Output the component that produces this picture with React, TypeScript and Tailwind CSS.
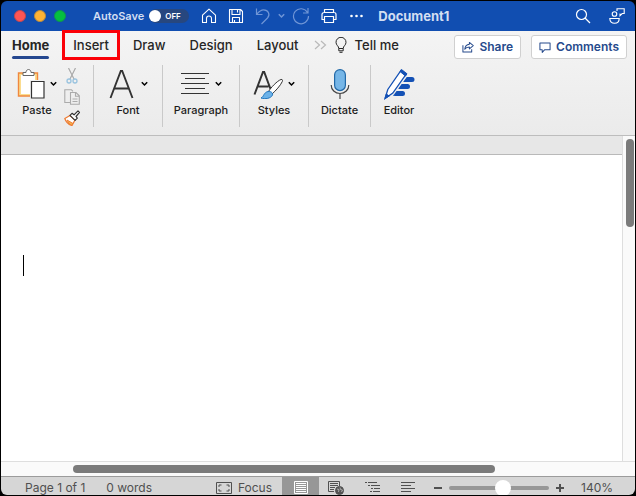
import type { ReactNode } from "react";

function Chevron({ className = "" }: { className?: string }) {
  return (
    <svg className={className} width="7" height="6" viewBox="0 0 7 6" fill="none" stroke="currentColor" strokeWidth="1.500">
      <path d="M.8 1.200 3.500 4 6.200 1.200" />
    </svg>
  );
}

function TitleBar() {
  return (
    <header className="flex h-[30px] shrink-0 items-center bg-[#114eb1] pr-[10px] pl-[13px] text-white">
      <div className="flex gap-2">
        <button aria-label="Close" className="size-3 rounded-full border border-[#c2464f] bg-[#ff5554]" />
        <button aria-label="Minimize" className="size-3 rounded-full border border-[#b98a3f] bg-[#ffb335]" />
        <button aria-label="Zoom" className="size-3 rounded-full border border-[#0f9450] bg-[#05c03f]" />
      </div>
      <label className="ml-[27px] flex items-center gap-[5px] text-[11px] leading-4 font-semibold text-[#d3def2]">
        AutoSave
        <span className="relative flex h-[14px] w-10 items-center rounded-full bg-[#27477f]">
          <input type="checkbox" role="switch" className="absolute inset-0 size-full appearance-none" />
          <span className="size-3 rounded-full bg-white" />
          <span className="ml-1 text-[8px] font-semibold text-white">OFF</span>
        </span>
      </label>
      <div className="ml-3 flex items-center gap-[11px]">
        <button aria-label="Home">
          <svg width="16" height="16" viewBox="0 0 16 16" fill="none" stroke="currentColor" strokeWidth="1.1" strokeLinejoin="round">
            <path d="M1.5 7.2 8 1.2l6.500 6v7.300h-4V10.500a2.500 2.500 0 0 0-5 0v4h-4z" />
          </svg>
        </button>
        <button aria-label="Save">
          <svg width="16" height="16" viewBox="0 0 16 16" fill="none" stroke="currentColor" strokeWidth="1.1" strokeLinejoin="round">
            <path d="M1.500 1.500h11l2 2v11h-13zM4 1.500v5h8v-5M4.500 14.500V9.500h7v5M9.500 2v2.500M6.500 12v2.500" />
          </svg>
        </button>
        <div className="flex items-center gap-[7px] text-[#6f95d6]">
          <button aria-label="Undo">
            <svg width="16" height="18" viewBox="0 0 16 18" fill="none" stroke="currentColor" strokeWidth="1.2">
              <path d="M1.500 1.500v6h6M1.800 7.200C4 4.500 6 2.800 8.500 2.800c5 0 7 5 4 8.200L6.500 17" />
            </svg>
          </button>
          <button aria-label="Undo history"><Chevron /></button>
          <button aria-label="Repeat">
            <svg width="18" height="18" viewBox="0 0 18 18" fill="none" stroke="currentColor" strokeWidth="1.200">
              <path d="M15.500 5.500A7.500 7.500 0 1 0 16.500 9M16 1v5h-5" />
            </svg>
          </button>
        </div>
        <button aria-label="Print">
          <svg width="16" height="16" viewBox="0 0 16 16" fill="none" stroke="currentColor" strokeWidth="1.200" strokeLinejoin="round">
            <path d="M3.500 4.500v-3h9v3M3.500 11.500h-2.500v-5a2 2 0 0 1 2-2h10a2 2 0 0 1 2 2v5h-2.500M3.500 8.500h9v6h-9z" />
          </svg>
        </button>
        <button aria-label="More commands" className="ml-[2px]">
          <svg width="13" height="4" viewBox="0 0 13 4" fill="currentColor">
            <circle cx="1.500" cy="2" r="1.300" /><circle cx="6.500" cy="2" r="1.300" /><circle cx="11.500" cy="2" r="1.300" />
          </svg>
        </button>
      </div>
      <h1 className="ml-[15px] text-[13px] leading-4 font-bold text-[#d3def2]">Document1</h1>
      <div className="ml-auto flex items-center gap-[18px]">
        <button aria-label="Search">
          <svg width="16" height="16" viewBox="0 0 16 16" fill="none" stroke="currentColor" strokeWidth="1.200">
            <circle cx="6.500" cy="6.500" r="5" /><path d="m10 10 5 5" />
          </svg>
        </button>
        <button aria-label="Presence">
          <svg width="16" height="16" viewBox="0 0 16 16" fill="none" stroke="currentColor" strokeWidth="1.100">
            <circle cx="5.500" cy="6" r="2.300" />
            <path d="M.8 10.500h9.400c0 3-2 4.800-4.700 4.800S.8 13.500.8 10.500zM8 3V.8h7.200v4.700h-2l-2.200 2.200V5.500" />
          </svg>
        </button>
      </div>
    </header>
  );
}

function Tabs() {
  return (
    <div className="flex h-7 items-center pr-2 pl-[11px] text-[13px] leading-4 text-[#262626]">
      <nav className="flex gap-[24px] font-medium">
        <button className="relative font-bold">
          Home
          <span className="absolute inset-x-0 -bottom-[6px] h-[3px] rounded-full bg-[#24478f]" />
        </button>
        <button className="relative">
          Insert
          <span className="absolute -inset-x-[11px] -inset-y-[7px] border-[3px] border-[#fb0007]" />
        </button>
        <button>Draw</button>
        <button>Design</button>
        <button>Layout</button>
      </nav>
      <button aria-label="More tabs" className="ml-[15px] text-[#b9b9b9]">
        <svg width="13" height="10" viewBox="0 0 13 10" fill="none" stroke="currentColor" strokeWidth="1.200">
          <path d="m1 1 4.500 4L1 9M7 1l4.500 4L7 9" />
        </svg>
      </button>
      <button className="ml-2 flex items-center gap-2 font-medium">
        <svg width="12" height="16" viewBox="0 0 12 16" fill="none" stroke="currentColor" strokeWidth="1">
          <path d="M3.800 11.500C3.800 9 1 8.300 1 5.300a5 5 0 0 1 10 0c0 3-2.800 3.700-2.800 6.200zM3.800 11.500v2.300h4.400v-2.300M4.500 15.300h3" />
        </svg>
        Tell me
      </button>
      <div className="mt-1 ml-auto flex gap-[10px] text-[12px] font-semibold text-[#264a8c]">
        <button className="flex h-6 items-center gap-[5px] rounded-[3px] border border-[#d0d0d0] bg-white px-[7px]">
          <svg width="12" height="12" viewBox="0 0 13 12" fill="none" stroke="currentColor" strokeWidth="1.100" strokeLinejoin="round">
            <path d="M1 4v7.300h9.500V8.500M8 1l4.200 3.500L8 8V6C5.500 6 4 6.800 3 8.500 3.300 5.500 5 3.200 8 3z" />
          </svg>
          Share
        </button>
        <button className="flex h-6 items-center gap-[5px] rounded-[3px] border border-[#d0d0d0] bg-white px-[7px]">
          <svg width="12" height="13" viewBox="0 0 13 13" fill="none" stroke="currentColor" strokeWidth="1.100" strokeLinejoin="round">
            <path d="M1 1.500h11v7.500H6L3.500 11.800V9H1z" />
          </svg>
          Comments
        </button>
      </div>
    </div>
  );
}

function Tool({ label, icon, menu = false, className = "" }: { label: string; icon: ReactNode; menu?: boolean; className?: string }) {
  return (
    <button className={`flex flex-col items-center ${className}`}>
      <span className="flex h-[38px] items-center gap-[5px]">
        {icon}
        {menu && <Chevron />}
      </span>
      <span className="text-[11px] leading-[14px] font-medium text-[#1c1c1c]">{label}</span>
    </button>
  );
}

function Ribbon() {
  return (
    <div className="mt-[6px] flex h-[62px] divide-x divide-[#c9c9c9]">
      <div className="flex w-[93px] justify-between pr-[13px] pl-4">
        <Tool
          label="Paste"
          menu
          className="-mr-1"
          icon={
            <svg width="28" height="32" viewBox="1 0 28 32" fill="none">
              <path d="M2.500 5h19v23h-19z" fill="#fbdc8f" stroke="#f0883e" strokeWidth="1.400" />
              <path d="M5 7h14v19H5z" fill="#fff" />
              <path d="M7 7.500V4.500h3c0-4 5-4 5 0h3v3z" fill="#fff" stroke="#666" />
              <path d="M14 12h14v18H14z" fill="#f0f0f0" />
              <path d="M15.500 13.500h12.500v16.500H15.500z" fill="#fff" stroke="#333" strokeWidth="1.200" />
            </svg>
          }
        />
        <div className="flex flex-col items-center gap-[5px] pt-[3px]">
          <button aria-label="Cut">
            <svg width="16" height="16" viewBox="0 0 16 16" fill="none">
              <path d="M4.500 0 10 11M11.500 0 6 11" stroke="#a9a9a9" strokeWidth="1.200" />
              <circle cx="5" cy="13" r="2" stroke="#99c3df" strokeWidth="1.300" />
              <circle cx="11" cy="13" r="2" stroke="#99c3df" strokeWidth="1.300" />
            </svg>
          </button>
          <button aria-label="Copy">
            <svg width="16" height="16" viewBox="0 0 16 16" fill="none" stroke="#ababab" strokeWidth="1.100">
              <path d="M6 13.500H.8V.8h6.700L9 2.300M6.500 3.500h5.500l3.300 3.300v8.500H6.500zM11.500 3.800V7.300h3.500M8.500 10h5M8.500 12.500h5" />
            </svg>
          </button>
          <button aria-label="Format painter">
            <svg width="16" height="16" viewBox="0 0 16 16" fill="none" strokeLinejoin="round">
              <path d="M6 5.500.8 8.500c1 3 4 6 7.200 7l3-5.500z" fill="#fff" stroke="#ee7d36" strokeWidth="1.300" />
              <path d="m3 10 6 3.500-1.200 1.800C5.500 14.500 3.500 12 3 10z" fill="#f5b34c" stroke="#ee7d36" />
              <path d="m6 5.300 2-2 2 1.500L14 .8l1.500 1.500L12 6.500l1.300 1.700-2.200 2.200z" fill="#fff" stroke="#333" strokeWidth="1.200" />
            </svg>
          </button>
        </div>
      </div>
      <Tool
        label="Font"
        menu
        className="w-[69px]"
        icon={
          <svg width="28" height="32" viewBox="0 0 28 32" fill="none" stroke="#333" strokeWidth="1.900">
            <path d="M2.500 30 12.800 3h1.400l10.300 27M6.300 20.500h14.400" />
          </svg>
        }
      />
      <Tool
        label="Paragraph"
        menu
        className="w-[77px]"
        icon={
          <svg width="30" height="24" viewBox="0 0 30 24" stroke="#333">
            <path d="M1 1.500h28M5 6.500h20M1 11.500h28M5 16.500h20M1 21.500h28" />
          </svg>
        }
      />
      <Tool
        label="Styles"
        menu
        className="w-[69px]"
        icon={
          <svg width="30" height="30" viewBox="0 0 30 30" fill="none">
            <path d="M1.500 25.500 10 3h1.200L17.500 20M5 17.500h10.500" stroke="#333" strokeWidth="2" />
            <path d="M15.500 22.500C18 18.500 24 12 28 10.500c1.500-.3 2 .8 1.300 2C27.500 16.500 22.500 22 19 25z" fill="#fff" stroke="#333" />
            <path d="M15 22.500c2.500-.5 5 1 4.500 3.500-1.500 3.500-7.500 4.500-11.500 3 3-1.300 2.500-5.500 7-6.500z" fill="#6cb2e8" stroke="#2175bd" />
          </svg>
        }
      />
      <Tool
        label="Dictate"
        className="w-[62px]"
        icon={
          <svg width="20" height="32" viewBox="0 0 20 32" fill="none">
            <rect x="4.600" y="1.600" width="10.800" height="21" rx="5.400" fill="#76b6e7" stroke="#2269a8" strokeWidth="1.200" />
            <path d="M1.200 17c0 4.800 3.800 8.500 8.800 8.500s8.800-3.700 8.800-8.500M10 25.500V31" stroke="#444" strokeWidth="1.200" />
          </svg>
        }
      />
      <Tool
        label="Editor"
        className="w-[56px]"
        icon={
          <svg width="32" height="32" viewBox="0 0 32 32" fill="none">
            <path d="M21 11.500h8M16.500 18.500h8M12 25.500h7.500" stroke="#1451b5" strokeWidth="5" strokeLinecap="round" />
            <path d="M1.500 31 4.500 21 18 1.800 24 6 10 25.500z" fill="#fff" stroke="#f0f0f0" strokeWidth="3" />
            <path d="M2 30.500 4.800 21.500 18 2.500l5 3.800L9.800 25z" fill="#fff" stroke="#1451b5" strokeWidth="1.300" />
            <path d="m17 3.500 1.500-2 5.500 4.300-1.500 2.200zM2 30.500l1.300-4.500 3 2z" fill="#1451b5" stroke="#1451b5" />
          </svg>
        }
      />
    </div>
  );
}

function StatusBar() {
  return (
    <footer className="flex h-[19px] shrink-0 items-center overflow-hidden border-t border-[#9b9b9b] bg-[#d6d6d6] pr-[22px] pl-6 text-[12px] leading-4 text-[#505050]">
      <span className="mt-[3px]">Page 1 of 1</span>
      <span className="mt-[3px] ml-[21px]">0 words</span>
      <div className="ml-auto flex h-full items-center">
        <button className="mt-[3px] flex items-center gap-[6px]">
          <svg width="16" height="12" viewBox="0 0 16 12" fill="none" stroke="currentColor">
            <path d="M.5.5h15v11H.500zM3 5V3h2.500M10.500 3H13v2M13 7v2h-2.500M5.500 9H3V7" />
          </svg>
          Focus
        </button>
        <button aria-label="Print layout" className="ml-[10px] flex h-full w-[37px] items-center justify-center bg-[#979797] pt-[3px]">
          <svg width="14" height="13" viewBox="0 0 14 13" fill="none" stroke="#fff">
            <path d="M.5.5h13v12H.500zM2 2.500h10M2 4.500h10M2 6.500h10M2 8.500h10M2 10.500h10" />
          </svg>
        </button>
        <button aria-label="Web layout" className="mt-[3px] ml-[9px]">
          <svg width="16" height="14" viewBox="0 0 16 14" fill="none" stroke="currentColor">
            <path d="M6 10.500H.500V.500h11V5M2 2.500h8M2 4.500h8M2 6.500h5M2 8.500h4" />
            <circle cx="11.500" cy="9.500" r="4" fill="#555" />
            <path d="m9 8 2 .5-.5 2.500M12 6.500l.5 2 2 .500-1 2" stroke="#ccc" strokeWidth=".7" />
          </svg>
        </button>
        <button aria-label="Outline" className="mt-[3px] ml-[21px]">
          <svg width="16" height="11" viewBox="0 0 16 11" stroke="currentColor">
            <path d="M0 .5h2M3 .5h9M3 3.500h2M6 3.500h9M6 6.500h2M9 6.500h6M5 9.500h2M8 9.500h7" />
          </svg>
        </button>
        <button aria-label="Draft" className="mt-[3px] ml-5">
          <svg width="14" height="11" viewBox="0 0 14 11" stroke="currentColor">
            <path d="M0 .5h14M0 3.500h10M0 6.500h14M0 9.500h10" />
          </svg>
        </button>
        <div className="mt-[3px] ml-[19px] flex items-center">
          <button aria-label="Zoom out">
            <svg width="8" height="8" viewBox="0 0 8 8" stroke="currentColor" strokeWidth="2"><path d="M0 4h8" /></svg>
          </button>
          <input
            type="range"
            aria-label="Zoom level"
            min="0"
            max="100"
            defaultValue="55"
            className="mx-[7px] h-4 w-[100px] appearance-none bg-transparent [&::-webkit-slider-runnable-track]:h-1 [&::-webkit-slider-runnable-track]:rounded-full [&::-webkit-slider-runnable-track]:bg-[#979797] [&::-webkit-slider-thumb]:-mt-[6px] [&::-webkit-slider-thumb]:size-4 [&::-webkit-slider-thumb]:appearance-none [&::-webkit-slider-thumb]:rounded-full [&::-webkit-slider-thumb]:bg-white"
          />
          <button aria-label="Zoom in">
            <svg width="8" height="8" viewBox="0 0 8 8" stroke="currentColor" strokeWidth="2"><path d="M0 4h8M4 0v8" /></svg>
          </button>
        </div>
        <button className="mt-[3px] ml-[17px]">140%</button>
      </div>
    </footer>
  );
}

export default function App() {
  return (
    <div className="flex h-screen flex-col bg-black p-px font-[Inter,sans-serif]">
      <div className="flex min-h-0 flex-1 flex-col overflow-hidden rounded-md">
        <TitleBar />
        <section aria-label="Ribbon" className="h-[105px] shrink-0 border-b border-[#bdbdbd] bg-linear-to-b from-[#f4f4f4] to-[#ebebeb]">
          <Tabs />
          <Ribbon />
        </section>
        <div className="flex min-h-0 flex-1">
          <main className="flex flex-1 flex-col">
            <div className="h-[19px] border-b border-[#b9b9b9] bg-[#e7e7e7]" />
            <div className="relative flex-1 bg-white">
              <textarea aria-label="Document text" className="block size-full resize-none px-[22px] pt-[100px] outline-none" />
              <span className="absolute top-[100px] left-[22px] h-[21px] w-px bg-black" />
            </div>
          </main>
          <div className="w-[13px] border-l border-[#dedede] bg-[#fafafa] pt-[3px] pl-[3px]">
            <div className="h-[88px] w-2 rounded-full bg-[#7b7b7b]" />
          </div>
        </div>
        <div className="h-[15px] shrink-0 border-t border-[#dedede] bg-[#fafafa] pt-[3px] pl-[72px]">
          <div className="h-2 w-3/4 rounded-full bg-[#7b7b7b]" />
        </div>
        <StatusBar />
      </div>
    </div>
  );
}
